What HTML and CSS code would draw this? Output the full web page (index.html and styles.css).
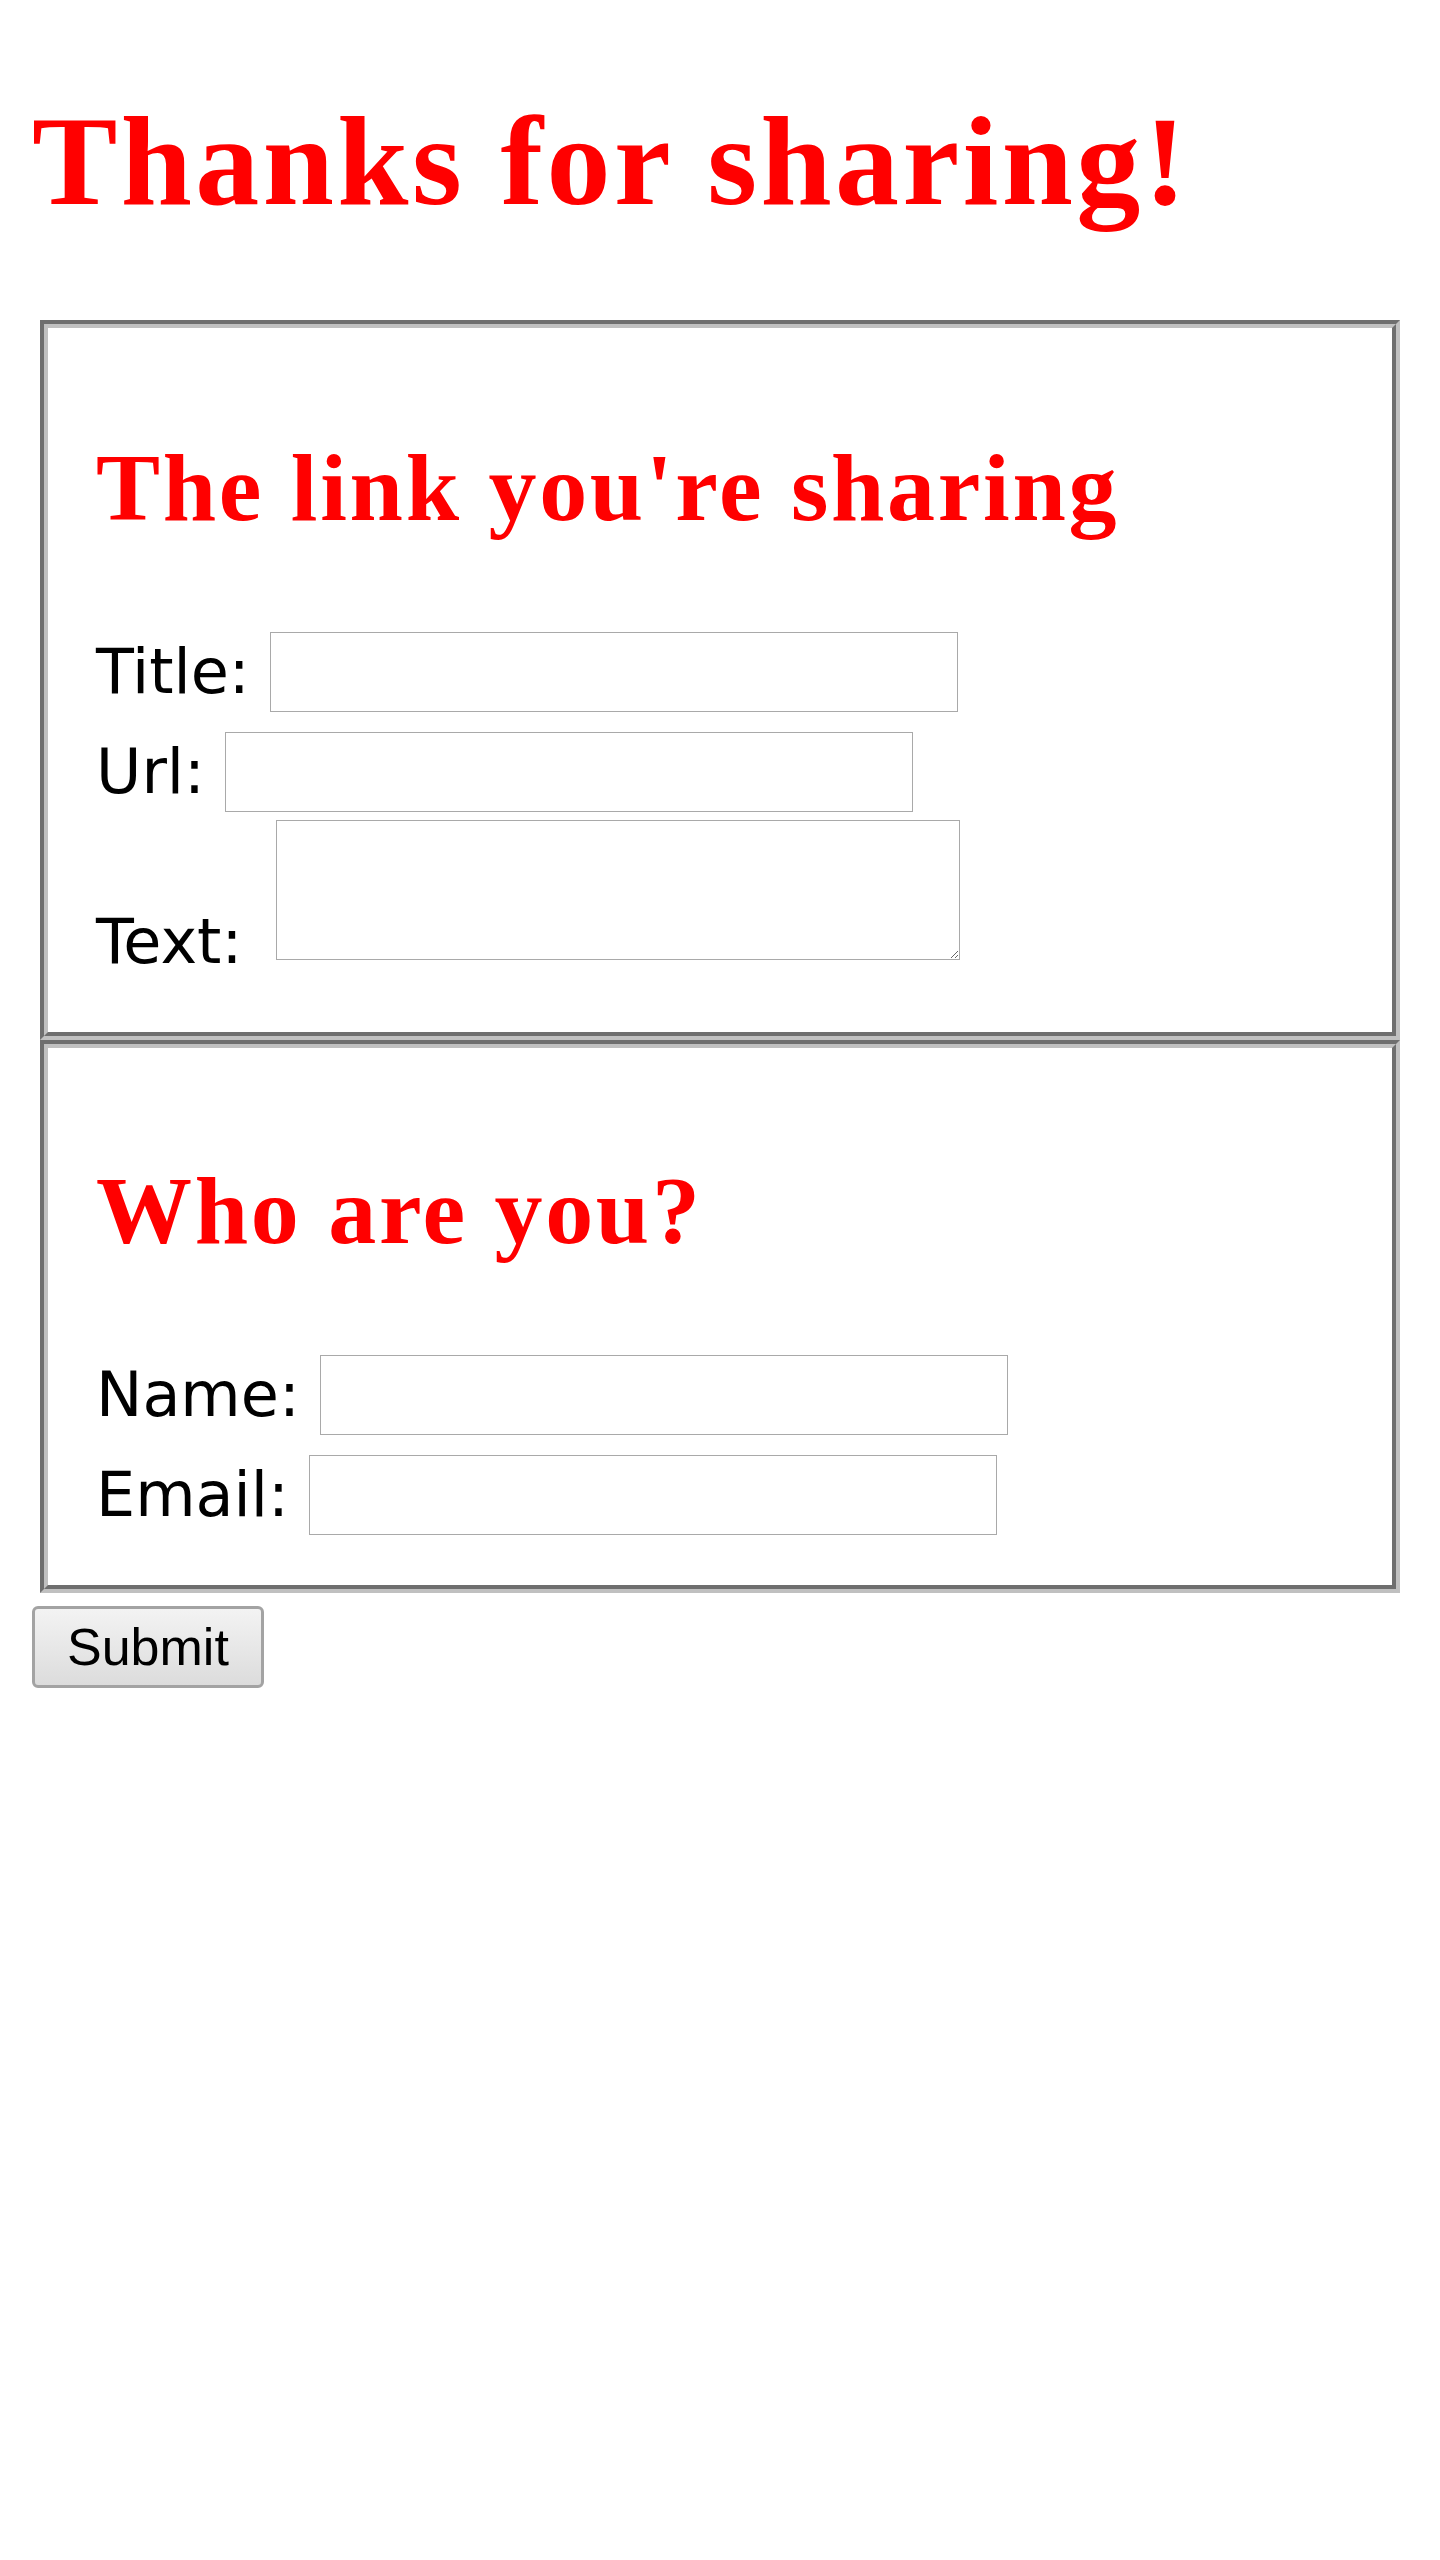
FILE: index.html
```html
<!DOCTYPE html>
<html lang="en">
<head>
<meta charset="utf-8">
<title>Thanks for sharing!</title>
<link rel="stylesheet" href="styles.css">
</head>
<body>
<h1 class="title">Thanks for sharing!</h1>
<form class="share-form">
  <div class="box">
    <div class="box-inner">
      <h2 class="section-title">The link you're sharing</h2>
      <div class="row"><label class="label" for="f-title">Title:</label><input class="field" id="f-title" type="text"></div>
      <div class="row"><label class="label" for="f-url">Url:</label><input class="field" id="f-url" type="text"></div>
      <div class="row row-area"><label class="label label-area" for="f-text">Text:</label><textarea class="field area" id="f-text"></textarea></div>
    </div>
  </div>
  <div class="box">
    <div class="box-inner box-inner-second">
      <h2 class="section-title">Who are you?</h2>
      <div class="row"><label class="label" for="f-name">Name:</label><input class="field" id="f-name" type="text"></div>
      <div class="row"><label class="label" for="f-email">Email:</label><input class="field" id="f-email" type="text"></div>
    </div>
  </div>
  <button class="submit" type="submit">Submit</button>
</form>
</body>
</html>
```
FILE: styles.css
```css
html {
  background: #fff;
}

body {
  margin: 0;
  padding: 0 32px;
  font-family: "DejaVu Sans", sans-serif;
  color: #000;
  background: #fff;
}

.title {
  margin: 86px 0 84px;
  font: bold 128px/150px "Liberation Serif", serif;
  letter-spacing: 3.4px;
  color: #f00;
}

.share-form {
  margin: 0;
}

.box {
  margin: 0 8px;
  border: 4px solid;
  border-color: #6e6e6e #c0c0c0 #c0c0c0 #6e6e6e;
}

.box-inner {
  border: 4px solid;
  border-color: #c0c0c0 #6e6e6e #6e6e6e #c0c0c0;
  padding: 22px 48px 40px;
}

.box-inner-second {
  padding-top: 25px;
}

.section-title {
  margin: 82px 0 78px;
  font: bold 96px/112px "Liberation Serif", serif;
  letter-spacing: 2.7px;
  color: #f00;
}

.row {
  display: flex;
  align-items: flex-end;
  gap: 20px;
  padding: 10px 0;
}

.label {
  font-size: 62px;
  line-height: 62px;
  margin-bottom: 9px;
}

.field {
  box-sizing: border-box;
  width: 688px;
  height: 80px;
  margin: 0;
  padding: 4px;
  border: 1px solid #a9a9a9;
  border-radius: 0;
  background: #fff;
  font-size: 52px;
  font-family: "Liberation Sans", sans-serif;
}

.row-area {
  padding: 0 0 32px;
  margin-top: -2px;
}

.area {
  width: 684px;
  height: 140px;
  margin-left: 14px;
  resize: both;
}

.label-area {
  margin-bottom: -13px;
}

.submit {
  display: block;
  margin: 13px 0 0;
  height: 82px;
  padding: 0 32px;
  border: 3px solid #a3a3a3;
  border-radius: 6px;
  background: linear-gradient(#f3f3f3, #dcdcdc);
  font: 52px "Liberation Sans", sans-serif;
  color: #000;
}
```
